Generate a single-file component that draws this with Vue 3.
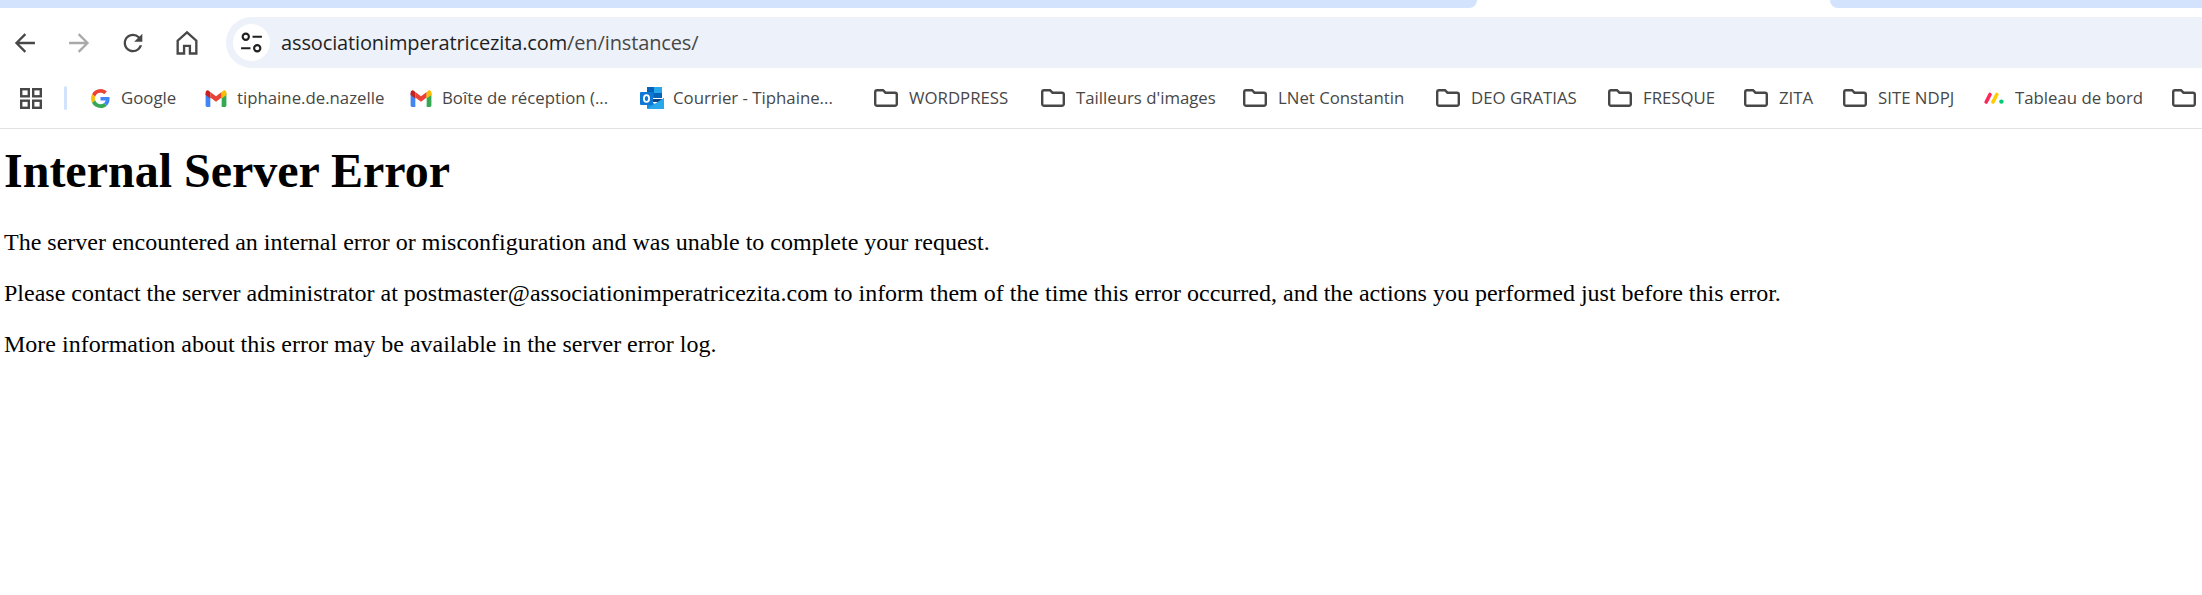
<script setup>
const bookmarks = [
  { id: 1, icon: 'google', label: 'Google', width: 114 },
  { id: 2, icon: 'gmail', label: 'tiphaine.de.nazelle', width: 205 },
  { id: 3, icon: 'gmail', label: 'Boîte de réception (...', width: 230 },
  { id: 4, icon: 'outlook', label: 'Courrier - Tiphaine...', width: 234 },
  { id: 5, icon: 'folder', label: 'WORDPRESS', width: 167 },
  { id: 6, icon: 'folder', label: "Tailleurs d'images", width: 202 },
  { id: 7, icon: 'folder', label: 'LNet Constantin', width: 193 },
  { id: 8, icon: 'folder', label: 'DEO GRATIAS', width: 172 },
  { id: 9, icon: 'folder', label: 'FRESQUE', width: 136 },
  { id: 10, icon: 'folder', label: 'ZITA', width: 99 },
  { id: 11, icon: 'folder', label: 'SITE NDPJ', width: 141 },
  { id: 12, icon: 'monday', label: 'Tableau de bord', width: 188 },
  { id: 13, icon: 'folder', label: '', width: 30 }
]
</script>

<template>
  <div class="page">
    <div class="tabstrip">
      <div class="tab-left"></div>
      <div class="tab-active"></div>
      <div class="tab-right"></div>
    </div>

    <div class="toolbar">
      <div class="nav">
        <svg class="nav-icon" viewBox="0 0 24 24"><path class="ic" d="M20.5 11H7.1l5.9-5.9L11.6 3.7 3.3 12l8.3 8.3 1.4-1.4L7.1 13h13.4z" /></svg>
        <svg class="nav-icon" viewBox="0 0 24 24"><path class="ic-off" d="M3.5 11h13.4l-5.9-5.9 1.4-1.4 8.3 8.3-8.3 8.3-1.4-1.4 5.9-5.9H3.5z" /></svg>
        <svg class="nav-icon" viewBox="0 0 24 24"><path class="ic" d="M17.65 6.35A7.958 7.958 0 0 0 12 4c-4.42 0-7.99 3.58-7.99 8s3.57 8 7.99 8c3.73 0 6.84-2.55 7.73-6h-2.08A5.99 5.99 0 0 1 12 18c-3.31 0-6-2.69-6-6s2.69-6 6-6c1.66 0 3.14.69 4.22 1.78L13 11h7V4l-2.35 2.35z" /></svg>
        <svg class="nav-icon" viewBox="0 0 24 24"><path class="st" d="M12 2.8 4 10v11h5.5v-6.5h5V21H20V10z" /></svg>
      </div>
      <div class="omnibox">
        <div class="site-chip">
          <svg class="tune" viewBox="0 0 24 24">
            <circle class="st" cx="6.5" cy="6.5" r="3" />
            <path class="st" d="M13 6.5h9M2 17.5h9" />
            <circle class="st" cx="17.5" cy="17.5" r="3" />
          </svg>
        </div>
        <div class="url"><span class="host">associationimperatricezita.com</span><span class="path">/en/instances/</span></div>
      </div>
    </div>

    <div class="bookmarks">
      <svg class="apps" viewBox="0 0 22 21">
        <rect class="st thick" x="1.2" y="1.2" width="7.6" height="7.1" />
        <rect class="st thick" x="13.2" y="1.2" width="7.6" height="7.1" />
        <rect class="st thick" x="1.2" y="12.7" width="7.6" height="7.1" />
        <rect class="st thick" x="13.2" y="12.7" width="7.6" height="7.1" />
      </svg>
      <div class="sep"></div>
      <div class="bm-list">
        <div v-for="b in bookmarks" :key="b.id" class="bm" :style="{ width: b.width + 'px' }">
          <svg v-if="b.icon === 'google'" class="fav g" viewBox="0 0 48 48">
            <path fill="#EA4335" d="M24 9.5c3.54 0 6.71 1.22 9.21 3.6l6.85-6.85C35.9 2.38 30.47 0 24 0 14.62 0 6.51 5.38 2.56 13.22l7.98 6.19C12.43 13.72 17.74 9.5 24 9.5z" />
            <path fill="#4285F4" d="M46.98 24.55c0-1.57-.15-3.09-.38-4.55H24v9.02h12.94c-.58 2.96-2.26 5.48-4.78 7.18l7.73 6c4.51-4.18 7.09-10.36 7.09-17.65z" />
            <path fill="#FBBC05" d="M10.53 28.59c-.48-1.45-.76-2.99-.76-4.59s.27-3.14.76-4.59l-7.98-6.19C.92 16.46 0 20.12 0 24c0 3.88.92 7.54 2.56 10.78l7.97-6.19z" />
            <path fill="#34A853" d="M24 48c6.48 0 11.93-2.13 15.89-5.81l-7.73-6c-2.15 1.45-4.92 2.3-8.16 2.3-6.26 0-11.57-4.22-13.47-9.91l-7.98 6.19C6.51 42.62 14.62 48 24 48z" />
          </svg>
          <svg v-else-if="b.icon === 'gmail'" class="fav m" viewBox="0 0 22 18">
            <path fill="#4285F4" d="M0 3v13.5A1.5 1.5 0 0 0 1.5 18H5V8z" />
            <path fill="#34A853" d="M17 8v10h3.5a1.5 1.5 0 0 0 1.5-1.5V3z" />
            <path fill="#EA4335" d="M5 8V2l6 4.5L17 2v6l-6 4.5z" />
            <path fill="#C5221F" d="M0 3v2.2L5 9V2L3.2.7C1.8-.4 0 .8 0 3z" />
            <path fill="#FBBC04" d="M17 2v7l5-3.8V3c0-2.2-1.8-3.4-3.2-2.3z" />
          </svg>
          <svg v-else-if="b.icon === 'outlook'" class="fav o" viewBox="0 0 24 24">
            <rect x="7" y="1" width="15" height="11" fill="#0364B8" />
            <rect x="14" y="1" width="8" height="6" fill="#28A8EA" />
            <rect x="7" y="6" width="7" height="6" fill="#0A6ECD" />
            <path fill="#14447D" d="M8 13h14v3H12z" />
            <path fill="#1490DF" d="M7 13l8 5 9-6v10a1 1 0 0 1-1 1H8a1 1 0 0 1-1-1z" />
            <path fill="#28A8EA" d="M7 23l17-11v10a1 1 0 0 1-1 1z" />
            <rect x="0" y="6" width="13" height="13" rx="1" fill="#0F78D4" />
            <ellipse cx="6.5" cy="12.5" rx="2.6" ry="3.4" fill="none" stroke="#fff" stroke-width="1.8" />
          </svg>
          <svg v-else-if="b.icon === 'monday'" class="fav d" viewBox="0 0 20 12">
            <path d="M2.2 10 6 2.5" stroke="#FB275D" stroke-width="3.6" stroke-linecap="round" fill="none" />
            <path d="M9 10l3.8-7.5" stroke="#FFCC00" stroke-width="3.6" stroke-linecap="round" fill="none" />
            <circle cx="17.4" cy="9.6" r="2.2" fill="#00CA72" />
          </svg>
          <svg v-else class="fav f" viewBox="0 0 24 18">
            <path class="st thick" d="M3 1.2h6l2.5 2.5H21a1.8 1.8 0 0 1 1.8 1.8V15a1.8 1.8 0 0 1-1.8 1.8H3A1.8 1.8 0 0 1 1.2 15V3A1.8 1.8 0 0 1 3 1.2z" />
          </svg>
          <span v-if="b.label" class="label">{{ b.label }}</span>
        </div>
      </div>
    </div>

    <main class="content">
      <h1>Internal Server Error</h1>
      <p>The server encountered an internal error or misconfiguration and was unable to complete your request.</p>
      <p>Please contact the server administrator at postmaster@associationimperatricezita.com to inform them of the time this error occurred, and the actions you performed just before this error.</p>
      <p>More information about this error may be available in the server error log.</p>
    </main>
  </div>
</template>

<style>
html, body { margin: 0; background: #fff; overflow: hidden; }
</style>

<style scoped>
.page { width: 2202px; height: 595px; overflow: hidden; background: #fff; }
.tabstrip { display: flex; height: 8px; }
.tab-left { width: 1477px; background: #d3e3fd; border-bottom-right-radius: 12px; }
.tab-active { width: 353px; background: #fff; }
.tab-right { flex: 1; background: #d3e3fd; border-bottom-left-radius: 12px; }
.toolbar { display: flex; align-items: center; height: 51px; padding-top: 9px; }
.nav { display: flex; width: 226px; padding-left: 11px; gap: 26px; box-sizing: border-box; }
.nav-icon { width: 28px; height: 28px; flex: none; }
.ic { fill: #474747; }
.ic-off { fill: #a9a9a9; }
.st { fill: none; stroke: #474747; stroke-width: 2; }
.st.thick { stroke-width: 2.4; }
.omnibox { flex: 1; height: 51px; display: flex; align-items: center; background: #edf1f9; border-radius: 26px 0 0 26px; padding-left: 7px; }
.site-chip { width: 37px; height: 37px; border-radius: 50%; background: #fff; display: flex; align-items: center; justify-content: center; }
.tune { width: 25px; height: 25px; }
.tune .st { stroke: #1f1f1f; }
.url { margin-left: 11px; font: 20px "Open Sans", sans-serif; letter-spacing: -0.13px; white-space: nowrap; }
.host { color: #1f1f1f; }
.path { color: #474747; }
.bookmarks { display: flex; align-items: center; height: 60px; border-bottom: 1px solid #e1e1e1; }
.apps { width: 22px; height: 21px; margin-left: 20px; flex: none; }
.sep { width: 3px; height: 24px; margin-left: 22px; background: #d3e3fd; border-radius: 2px; flex: none; }
.bm-list { display: flex; align-items: center; margin-left: 24px; }
.bm { display: flex; align-items: center; gap: 11px; flex: none; height: 36px; }
.fav { flex: none; }
.g { width: 19px; height: 19px; }
.m { width: 22px; height: 17px; margin-right: -1px; }
.o { width: 24px; height: 24px; margin-right: -2px; }
.f { width: 24px; height: 18px; }
.d { width: 20px; height: 12px; }
.label { font: 16.8px "Open Sans", sans-serif; color: #474747; white-space: nowrap; margin-top: -2px; }
.content { padding-left: 4px; color: #000; font-family: "Liberation Serif", serif; }
h1 { font-size: 48px; font-weight: 700; margin: 0; padding-top: 14px; }
p { font-size: 24px; margin: 24px 0 0; }
h1 + p { margin-top: 31px; }
</style>
